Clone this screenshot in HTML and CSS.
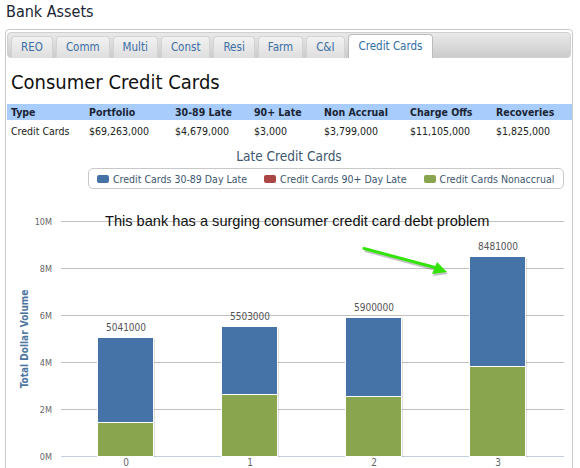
FILE: index.html
```html
<!DOCTYPE html>
<html>
<head>
<meta charset="utf-8">
<link rel="stylesheet" href="styles.css">
</head>
<body>
<h1 class="page-title">Bank Assets</h1>
<div class="panel">
  <ul class="tabs">
    <li class="tab">REO</li>
    <li class="tab">Comm</li>
    <li class="tab">Multi</li>
    <li class="tab">Const</li>
    <li class="tab">Resi</li>
    <li class="tab">Farm</li>
    <li class="tab">C&amp;I</li>
    <li class="tab active">Credit Cards</li>
  </ul>
  <h2 class="section-title">Consumer Credit Cards</h2>
  <table class="data">
    <colgroup>
      <col class="c1"><col class="c2"><col class="c3"><col class="c4"><col class="c5"><col class="c6"><col>
    </colgroup>
    <thead>
      <tr><th>Type</th><th>Portfolio</th><th>30-89 Late</th><th>90+ Late</th><th>Non Accrual</th><th>Charge Offs</th><th>Recoveries</th></tr>
    </thead>
    <tbody>
      <tr><td>Credit Cards</td><td>$69,263,000</td><td>$4,679,000</td><td>$3,000</td><td>$3,799,000</td><td>$11,105,000</td><td>$1,825,000</td></tr>
    </tbody>
  </table>
  <div class="chart">
    <div class="chart-title">Late Credit Cards</div>
    <div class="legend">
      <span class="legend-item"><span class="swatch blue"></span>Credit Cards 30-89 Day Late</span>
      <span class="legend-item"><span class="swatch red"></span>Credit Cards 90+ Day Late</span>
      <span class="legend-item"><span class="swatch green"></span>Credit Cards Nonaccrual</span>
    </div>
    <div class="plot">
      <svg class="plot-svg" width="564" height="290" viewBox="0 0 564 290" xmlns="http://www.w3.org/2000/svg">
        <g transform="translate(-7,-189)">
          <g stroke="#c0c0c0" stroke-width="1">
            <line x1="61" y1="221.5" x2="564" y2="221.5"/>
            <line x1="61" y1="268.5" x2="564" y2="268.5"/>
            <line x1="61" y1="315.5" x2="564" y2="315.5"/>
            <line x1="61" y1="362.5" x2="564" y2="362.5"/>
            <line x1="61" y1="409.5" x2="564" y2="409.5"/>
          </g>
          <line x1="61" y1="456.5" x2="564" y2="456.5" stroke="#c0d0e0" stroke-width="1"/>
          <g class="ylab" text-anchor="end">
            <text x="52" y="224.5">10M</text>
            <text x="52" y="271.5">8M</text>
            <text x="52" y="318.5">6M</text>
            <text x="52" y="365.5">4M</text>
            <text x="52" y="412.5">2M</text>
            <text x="52" y="459.5">0M</text>
          </g>
          <text class="axis-title" transform="translate(28,339) rotate(-90)" text-anchor="middle">Total Dollar Volume</text>
          <g fill="#000" opacity="0.12">
            <rect x="99" y="339" width="56" height="118"/>
            <rect x="223" y="328" width="56" height="129"/>
            <rect x="347" y="319" width="56" height="138"/>
            <rect x="471" y="258" width="56" height="199"/>
          </g>
          <g stroke="#fff" stroke-width="1">
            <rect x="97.5" y="337.5" width="56" height="85" fill="#4572a7"/>
            <rect x="97.5" y="422.5" width="56" height="34" fill="#89a54e"/>
            <rect x="221.5" y="326.5" width="56" height="68" fill="#4572a7"/>
            <rect x="221.5" y="394.5" width="56" height="62" fill="#89a54e"/>
            <rect x="345.5" y="317.5" width="56" height="79" fill="#4572a7"/>
            <rect x="345.5" y="396.5" width="56" height="60" fill="#89a54e"/>
            <rect x="469.5" y="256.5" width="56" height="110" fill="#4572a7"/>
            <rect x="469.5" y="366.5" width="56" height="90" fill="#89a54e"/>
          </g>
          <g class="vlab" text-anchor="middle">
            <text x="126" y="331">5041000</text>
            <text x="250" y="320">5503000</text>
            <text x="374" y="311">5900000</text>
            <text x="498" y="250">8481000</text>
          </g>
          <g class="xlab" text-anchor="middle">
            <text x="126" y="466">0</text>
            <text x="250" y="466">1</text>
            <text x="374" y="466">2</text>
            <text x="498" y="466">3</text>
          </g>
          <g opacity="0.35" transform="translate(1,2)">
            <line x1="364" y1="248.5" x2="437" y2="268" stroke="#555" stroke-width="3"/>
            <polygon points="447,272 432,274 437,262" fill="#555"/>
          </g>
          <line x1="364" y1="248.5" x2="437" y2="268" stroke="#33e30a" stroke-width="3" stroke-linecap="round"/>
          <polygon points="447,272 432,274 437,262" fill="#33e30a"/>
        </g>
      </svg>
      <div class="annotation">This bank has a surging consumer credit card debt problem</div>
    </div>
  </div>
</div>
</body>
</html>
```
FILE: styles.css
```css
html, body {
  margin: 0;
  padding: 0;
  background: #fff;
}
body {
  font-family: "DejaVu Sans Condensed", "DejaVu Sans", sans-serif;
  font-stretch: condensed;
  color: #222;
  width: 580px;
  height: 468px;
  overflow: hidden;
}
.page-title {
  margin: 0 0 0 6px;
  padding-top: 1px;
  font-size: 16px;
  line-height: 21px;
  font-weight: normal;
  color: #1a2534;
}
.panel {
  margin: 7px 0 0 5px;
  width: 568px;
  height: 460px;
  box-sizing: border-box;
  border: 1px solid #cacaca;
  border-radius: 4px;
  padding: 2px 1px 0 1px;
}
.tabs {
  list-style: none;
  margin: 0;
  padding: 3px 0 0 3px;
  height: 26px;
  box-sizing: border-box;
  display: flex;
  align-items: flex-end;
  gap: 3px;
  background: linear-gradient(#e9e9e9, #cccccc);
  border: 1px solid #d0d0d0;
  border-radius: 4px;
}
.tab {
  height: 22px;
  box-sizing: border-box;
  padding: 0 9px;
  font-size: 11.5px;
  line-height: 21px;
  color: #3a6ea5;
  background: linear-gradient(#f2f2f2, #dedede);
  border: 1px solid #d3d3d3;
  border-bottom: none;
  border-radius: 4px 4px 0 0;
  margin-bottom: -1px;
}
.tab.active {
  height: 24px;
  line-height: 22px;
  background: #fff;
  border-color: #bbb;
  color: #2e6ea5;
  padding: 0 10px;
}
.section-title {
  margin: 11px 0 0 4px;
  font-size: 20px;
  line-height: 26px;
  font-weight: normal;
  color: #111;
}
.data {
  margin-top: 9px;
  width: 565px;
  border-collapse: collapse;
  table-layout: fixed;
  font-size: 10.5px;
}
.data col.c1 { width: 78px; }
.data col.c2 { width: 86px; }
.data col.c3 { width: 79px; }
.data col.c4 { width: 70px; }
.data col.c5 { width: 86px; }
.data col.c6 { width: 86px; }
.data th {
  background: #a8cdfc;
  text-align: left;
  font-weight: bold;
  color: #1a2433;
  padding: 0 0 0 4px;
  height: 16px;
  line-height: 16px;
}
.data td {
  text-align: left;
  padding: 0 0 0 4px;
  height: 22px;
  line-height: 22px;
  color: #222;
}
.chart {
  margin-top: 4px;
}
.chart-title {
  text-align: center;
  font-size: 13.5px;
  line-height: 20px;
  color: #3e576f;
}
.legend {
  margin: 2px 0 0 81px;
  width: 476px;
  height: 21px;
  box-sizing: border-box;
  border: 1px solid #c8c8c8;
  border-radius: 5px;
  display: flex;
  align-items: center;
  gap: 17px;
  padding-left: 8px;
  font-size: 10.5px;
  color: #3e576f;
}
.legend-item {
  display: flex;
  align-items: center;
  gap: 4px;
  white-space: nowrap;
}
.swatch {
  display: inline-block;
  width: 12px;
  height: 8px;
  border-radius: 2px;
}
.swatch.blue { background: #4572a7; }
.swatch.red { background: #aa4643; }
.swatch.green { background: #89a54e; }
.plot {
  position: relative;
  height: 290px;
}
.plot-svg {
  display: block;
  font-family: "DejaVu Sans Condensed", "DejaVu Sans", sans-serif;
}
.ylab text {
  font-size: 9px;
  fill: #666;
}
.vlab text {
  font-size: 10px;
  fill: #555;
}
.xlab text {
  font-size: 10px;
  fill: #666;
}
.axis-title {
  font-size: 10px;
  font-weight: bold;
  fill: #4d759e;
}
.annotation {
  position: absolute;
  left: 98px;
  top: 23px;
  font-family: "Liberation Sans", Arial, sans-serif;
  font-size: 14.6px;
  line-height: 18px;
  color: #111;
  white-space: nowrap;
}
```
